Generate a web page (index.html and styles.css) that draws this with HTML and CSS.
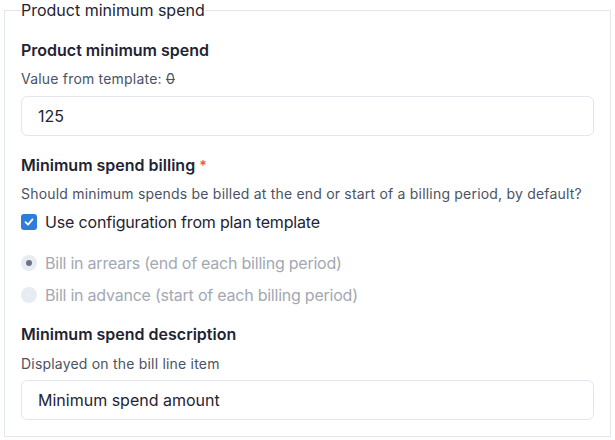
FILE: index.html
```html
<!DOCTYPE html>
<html>
<head>
<meta charset="utf-8">
<link rel="stylesheet" href="styles.css">
</head>
<body>
<fieldset class="box">
  <legend class="legend">Product minimum spend</legend>
  <div class="field first">
    <div class="label">Product minimum spend</div>
    <div class="hint">Value from template: <span class="strike">0</span></div>
    <div class="input">125</div>
  </div>
  <div class="field">
    <div class="label">Minimum spend billing <span class="req">*</span></div>
    <div class="hint">Should minimum spends be billed at the end or start of a billing period, by default?</div>
    <div class="check-row">
      <span class="checkbox"><svg width="12" height="12" viewBox="0 0 12 12"><path d="M2.5 6.2 L5 8.6 L9.5 3.4" fill="none" stroke="#fff" stroke-width="1.8" stroke-linecap="round" stroke-linejoin="round"/></svg></span>
      <span class="check-label">Use configuration from plan template</span>
    </div>
    <div class="radios">
      <div class="radio-row"><span class="radio on"></span><span class="radio-label">Bill in arrears (end of each billing period)</span></div>
      <div class="radio-row"><span class="radio"></span><span class="radio-label">Bill in advance (start of each billing period)</span></div>
    </div>
  </div>
  <div class="field last">
    <div class="label">Minimum spend description</div>
    <div class="hint">Displayed on the bill line item</div>
    <div class="input">Minimum spend amount</div>
  </div>
</fieldset>
</body>
</html>
```
FILE: styles.css
```css
html, body {
  margin: 0;
  padding: 0;
  background: #fff;
}
body {
  padding: 0 4px 0 4px;
  font-family: "Inter", "Liberation Sans", sans-serif;
  color: #1f2433;
}
.box {
  margin: 0;
  border: 1px solid #e2e6ee;
  padding: 8px 16px 16px 16px;
  min-width: 0;
}
.legend {
  padding: 0;
  margin-left: 0;
  font-size: 16px;
  line-height: 20px;
  color: #1f2433;
}
.field {
  display: flex;
  flex-direction: column;
}
.label {
  font-size: 16px;
  font-weight: 600;
  line-height: 20px;
  margin-top: 9px;
}
.first .label { margin-top: 12px; }
.last .label { margin-top: 8px; }
.req { color: #ef5350; font-size: 14px; }
.hint {
  font-size: 14px;
  letter-spacing: 0.2px;
  line-height: 16px;
  color: #4b5363;
  margin-top: 10px;
}
.first .hint { margin-top: 11px; }
.last .hint { margin-top: 12px; }
.strike { text-decoration: line-through; }
.input {
  margin-top: 9px;
  height: 38px;
  border: 1px solid #e2e6ee;
  border-radius: 6px;
  padding: 0 16px;
  display: flex;
  align-items: center;
  font-size: 16px;
  color: #1f2433;
}
.last .input { margin-top: 8px; }
.field + .field { margin-top: 10px; }
.check-row {
  display: flex;
  align-items: center;
  gap: 8px;
  margin-top: 9px;
  height: 22px;
}
.checkbox {
  width: 16px;
  height: 16px;
  border-radius: 3px;
  background: #2f7ddb;
  display: flex;
  align-items: center;
  justify-content: center;
}
.check-label { font-size: 16px; letter-spacing: -0.17px; color: #1f2433; }
.radios {
  display: flex;
  flex-direction: column;
  gap: 10px;
  margin-top: 19px;
}
.radio-row {
  display: flex;
  align-items: center;
  gap: 8px;
  height: 22px;
}
.radio {
  width: 16px;
  height: 16px;
  border-radius: 50%;
  background: #e7ebf2;
  display: flex;
  align-items: center;
  justify-content: center;
}
.radio.on::after {
  content: "";
  width: 6px;
  height: 6px;
  border-radius: 50%;
  background: #6b7384;
}
.radio-label { font-size: 16px; letter-spacing: -0.23px; color: #a3a8b3; }
```
